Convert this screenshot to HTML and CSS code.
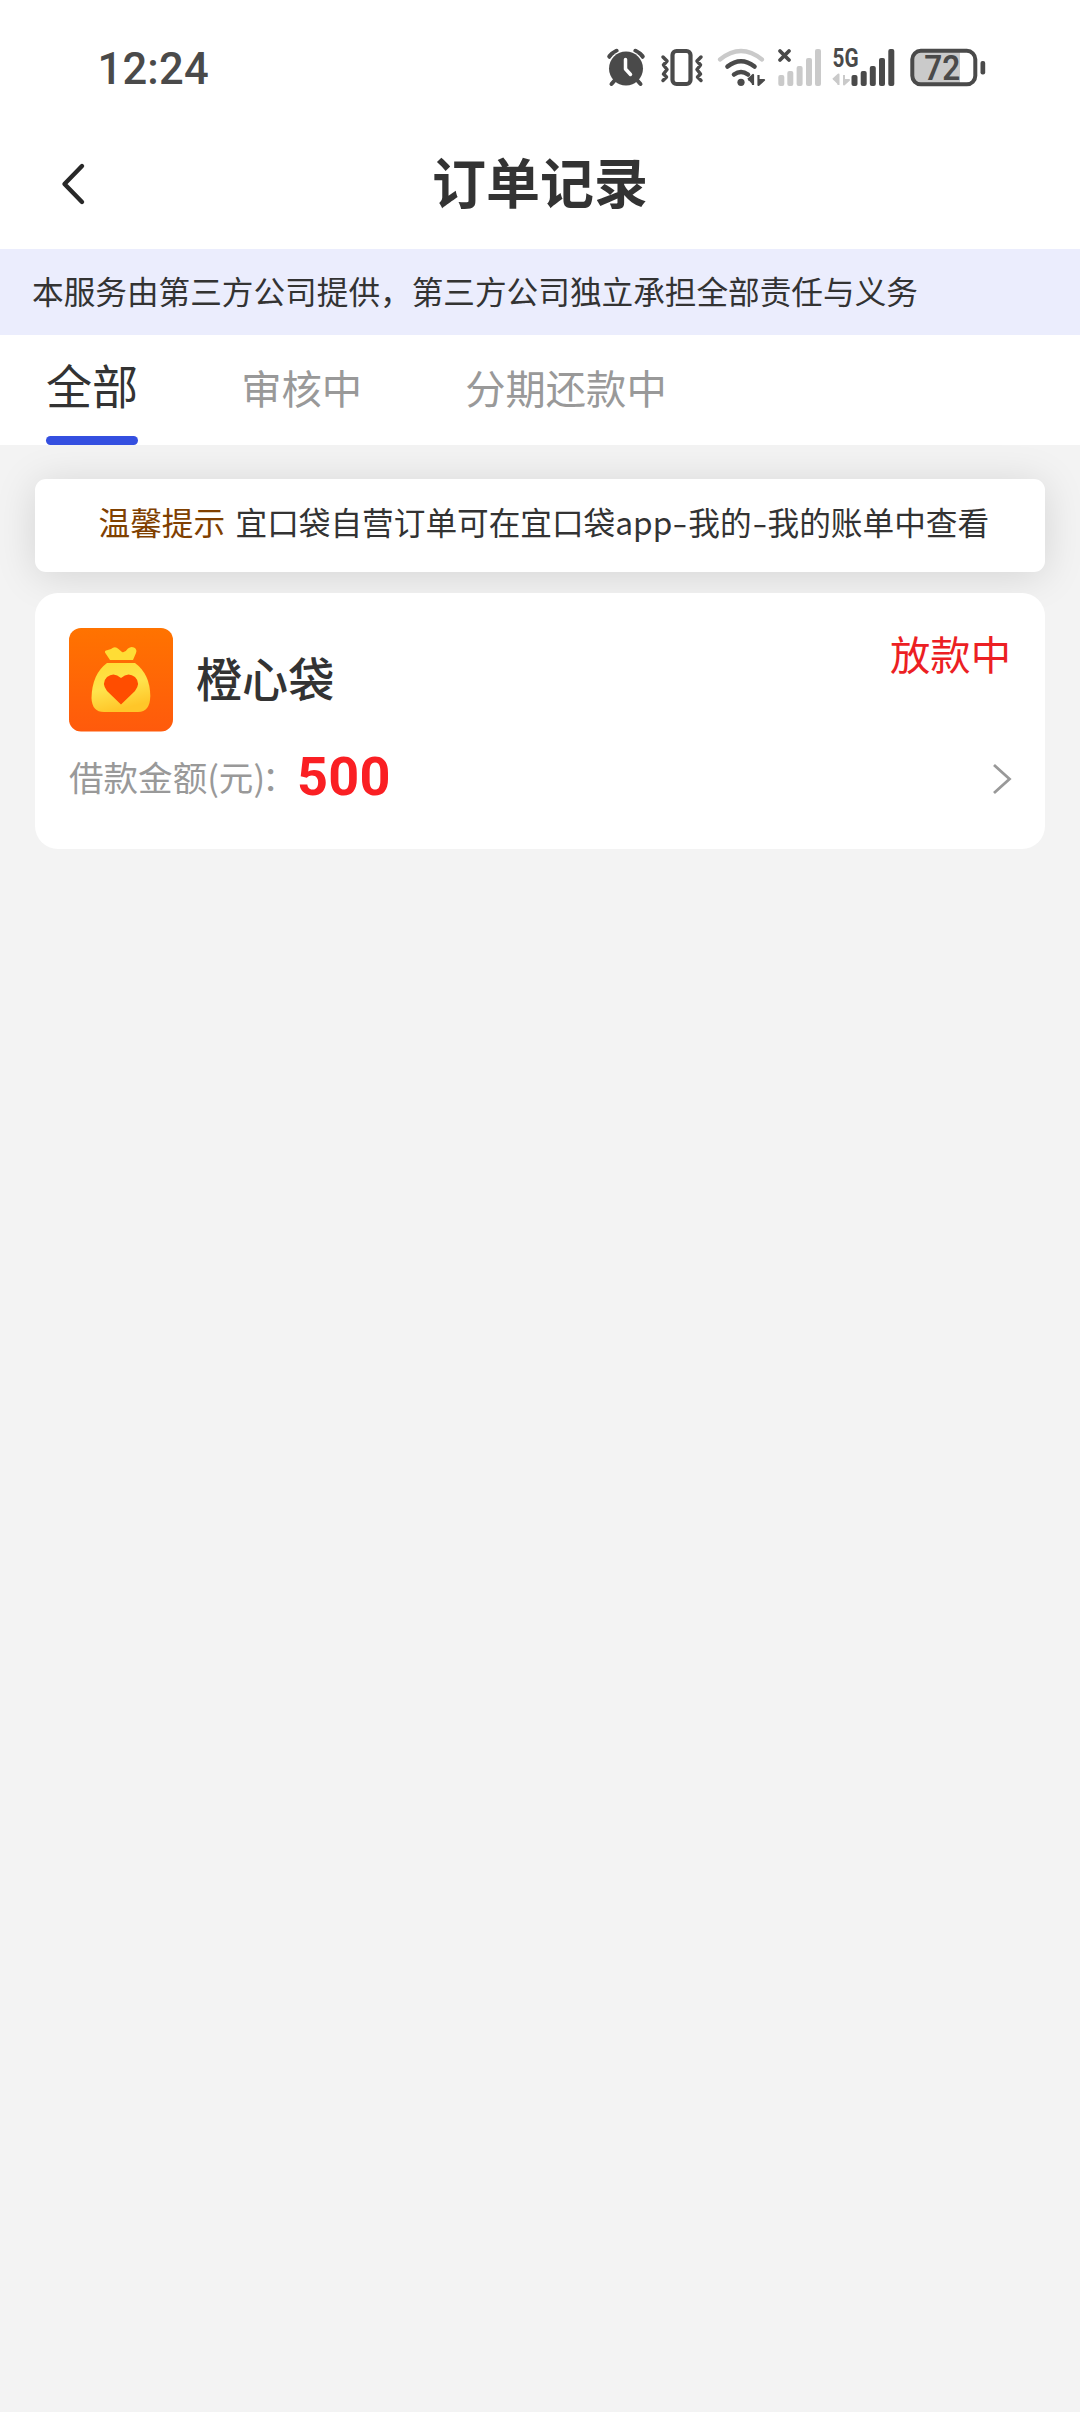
FILE: index.html
```html
<!DOCTYPE html>
<html lang="zh-CN">
<head>
<meta charset="utf-8">
<title>订单记录</title>
<link rel="stylesheet" href="styles.css">
</head>
<body>
<header class="top">
  <div class="status">
    <span class="clock">12:24</span>
    <div class="status-icons">
      <svg class="alarm" width="40" height="40" viewBox="0 0 40 40">
        <path d="M3.500 8.500A20 20 0 0 1 10.500 3M36.500 8.500A20 20 0 0 0 29.500 3" stroke="#4a4a4a" stroke-width="4.500" fill="none" stroke-linecap="round"/>
        <circle cx="20" cy="20.500" r="18.500" fill="#fff"/>
        <path d="M9 32L5.500 36M31 32L34.500 36" stroke="#4a4a4a" stroke-width="4" stroke-linecap="round"/>
        <circle cx="20" cy="20.500" r="17" fill="#4a4a4a"/>
        <path d="M19.500 11.500V21L24.500 26.500" stroke="#fff" stroke-width="3.500" fill="none" stroke-linecap="round" stroke-linejoin="round"/>
      </svg>
      <svg class="vibrate" width="44" height="40" viewBox="0 0 44 40">
        <rect x="12.500" y="3" width="18" height="33" rx="4" fill="none" stroke="#4a4a4a" stroke-width="4.200"/>
        <path d="M3 9L7 13L3.500 17L7 21.500L3.500 26L6.500 29L3 32.500M41 9L37 13L40.500 17L37 21.500L40.500 26L37.500 29L41 32.500" fill="none" stroke="#4a4a4a" stroke-width="3.500" stroke-linecap="round" stroke-linejoin="round"/>
      </svg>
      <svg class="wifi" width="50" height="40" viewBox="0 0 50 40">
        <path d="M3 11.500Q24 -5.500 45 11.500" fill="none" stroke="#cacaca" stroke-width="4.200" stroke-linecap="round"/>
        <path d="M10.500 18.500Q24 8 37.500 18.500" fill="none" stroke="#4a4a4a" stroke-width="4.600" stroke-linecap="round"/>
        <path d="M17 26.500Q24 21.500 31 26.500" fill="none" stroke="#4a4a4a" stroke-width="4.600" stroke-linecap="round"/>
        <circle cx="24" cy="34.300" r="3.600" fill="#4a4a4a"/>
        <path d="M31 31.500L36 27V37M36 31.500H31M41.500 27V37L47 32H41.500" fill="#4a4a4a" stroke="#4a4a4a" stroke-width="2.200" stroke-linejoin="round"/>
      </svg>
      <svg class="no-sim" width="46" height="40" viewBox="0 0 46 40">
        <path d="M3 3L12 12M12 3L3 12" stroke="#4a4a4a" stroke-width="3.800" stroke-linecap="round"/>
        <g fill="#cacaca"><rect x="1.300" y="27" width="6" height="11" rx="2"/><rect x="10.300" y="23" width="6" height="15" rx="2"/><rect x="19.600" y="18" width="6" height="20" rx="2"/><rect x="29" y="10" width="6" height="28" rx="2"/><rect x="38" y="1" width="6" height="37" rx="2"/></g>
      </svg>
      <svg class="mobile" width="64" height="40" viewBox="0 0 64 40">
        <text x="-.5" y="18.800" class="network" textLength="26" lengthAdjust="spacingAndGlyphs">5G</text>
        <path d="M0 31.500L5.500 26.500V37M11 27V36.500L16 32H11" fill="#cacaca" stroke="#cacaca" stroke-width="2" stroke-linejoin="round"/>
        <g fill="#4a4a4a"><rect x="18.500" y="27" width="6" height="11" rx="2"/><rect x="27.700" y="23" width="6" height="15" rx="2"/><rect x="36.800" y="18" width="6" height="20" rx="2"/><rect x="46" y="10" width="6" height="28" rx="2"/><rect x="55.300" y="1" width="6" height="37" rx="2"/></g>
      </svg>
      <svg class="battery" width="77" height="40" viewBox="0 0 77 40">
        <path d="M10 3H50V36H10Q3 36 3 29V10Q3 3 10 3Z" fill="#cacaca"/>
        <rect x="2.300" y="2.800" width="63" height="33.500" rx="8.500" fill="none" stroke="#4a4a4a" stroke-width="4"/>
        <rect x="70.500" y="13" width="4.700" height="13.500" rx="2" fill="#4a4a4a"/>
        <text x="14.300" y="31.700" class="level" textLength="36" lengthAdjust="spacingAndGlyphs">72</text>
      </svg>
    </div>
  </div>
  <div class="nav">
    <svg class="back" width="24" height="44" viewBox="0 0 24 44"><path d="M21 4L3.500 22L21 40" fill="none" stroke="#282828" stroke-width="4.400" stroke-linecap="round" stroke-linejoin="round"/></svg>
    <h1 class="title">订单记录</h1>
  </div>
</header>
<p class="disclaimer">本服务由第三方公司提供，第三方公司独立承担全部责任与义务</p>
<nav class="tabs">
  <span class="tab tab-active">全部</span>
  <span class="tab">审核中</span>
  <span class="tab">分期还款中</span>
</nav>
<main class="content">
  <div class="notice"><span class="notice-label">温馨提示</span><span>宜口袋自营订单可在宜口袋<span class="latin">app</span><span class="dash">-</span>我的<span class="dash">-</span>我的账单中查看</span></div>
  <section class="order">
    <div class="order-head">
      <svg class="logo" width="104" height="104" viewBox="0 0 104 104">
        <defs>
          <linearGradient id="orange" x1="0" y1="0" x2="0" y2="1"><stop offset="0" stop-color="#ff7300"/><stop offset="1" stop-color="#ff5a0c"/></linearGradient>
          <linearGradient id="gold" x1="0" y1="0" x2=".3" y2="1"><stop offset="0" stop-color="#ffdc33"/><stop offset=".55" stop-color="#ffe34c"/><stop offset="1" stop-color="#ffc629"/></linearGradient>
        </defs>
        <rect width="104" height="103.500" rx="12" fill="url(#orange)"/>
        <path d="M41 32L36 24.500Q35.500 22.500 38 22.300L42 21Q46 17.500 49.500 21L53 24Q56 25 59 20.500Q62 18 65 19.500Q68.500 21.500 67 25L64 32Z" fill="#ffdd35"/>
        <path d="M38 35H66Q81 46 81.300 68Q81 84 69 84H35Q23 84 22.500 70Q23 46 38 35Z" fill="url(#gold)"/>
        <path d="M52 76.500L38 63Q32 55 38 49Q45 43.500 52 50Q59 43.500 66 49Q72 55 66 63Z" fill="#ff4d00"/>
      </svg>
      <h2 class="name">橙心袋</h2>
      <span class="state">放款中</span>
    </div>
    <div class="order-row">
      <span class="label">借款金额(元)<span class="colon">：</span></span>
      <strong class="amount">500</strong>
      <svg class="more" width="22" height="34" viewBox="0 0 22 34"><path d="M3 3L18.500 17L3 31" fill="none" stroke="#999" stroke-width="2.800"/></svg>
    </div>
  </section>
</main>
</body>
</html>
```
FILE: styles.css
```css
* { box-sizing: border-box; margin: 0; }
body {
  width: 1080px;
  min-height: 2412px;
  background: #f3f3f3;
  color: #333;
  font-family: "Noto Sans CJK SC", sans-serif;
}
svg { display: block; flex: none; overflow: visible; }
.top { height: 249px; background: #fff; }
.status { display: flex; justify-content: space-between; height: 120px; padding: 48px 93px 0 97.500px; }
.clock { font: 500 43.500px/43px Roboto, sans-serif; color: #4a4a4a; letter-spacing: .2px; }
.status-icons { display: flex; }
.vibrate { margin-left: 14px; }
.wifi { margin-left: 13px; }
.no-sim { margin-left: 10px; }
.mobile { margin-left: 10px; }
.battery { margin-left: 13px; }
.network { font: 700 25px Roboto, sans-serif; fill: #4a4a4a; }
.level { font: 600 34.300px Roboto, sans-serif; fill: #4a4a4a; }
.nav { display: flex; align-items: flex-start; height: 129px; padding: 42px 62px 0 61px; }
.title { flex: 1; margin: -21px 23px 0 0; text-align: center; font-size: 54px; font-weight: 700; line-height: 80px; }
.disclaimer {
  height: 86px;
  padding-left: 32px;
  background: #ebedfd;
  font-size: 31.650px;
  line-height: 82px;
}
.tabs { display: flex; gap: 103px; height: 110px; padding-left: 46px; background: #fff; }
.tab { font-size: 40.320px; line-height: 104px; color: #999; }
.tab-active {
  display: flex;
  flex-direction: column;
  justify-content: space-between;
  font-size: 46.080px;
  line-height: 99px;
  color: #333;
}
.tab-active::after { content: ""; height: 9px; border-radius: 4.500px; background: #344fe0; }
.content { display: flex; flex-direction: column; gap: 21px; padding: 34px 35px 0; }
.notice {
  display: flex;
  gap: 10.500px;
  height: 93px;
  padding-left: 63.500px;
  border-radius: 11px;
  background: #fff;
  box-shadow: 0 4px 42px rgba(0, 0, 0, .13);
  font-size: 31.650px;
  line-height: 85px;
  white-space: nowrap;
}
.notice-label { color: #804000; }
.dash { display: inline-block; width: 16px; text-align: center; transform: scaleX(1.35); }
.order { position: relative; height: 256px; padding: 35px 34px 0; border-radius: 23px; background: #fff; }
.order-head { display: flex; }
.name { margin-left: 23px; font-size: 46.080px; font-weight: 500; line-height: 99px; }
.state { margin-left: auto; font-size: 40.320px; line-height: 49px; color: #ec1f23; }
.order-row { display: flex; align-items: flex-start; height: 92px; }
.label { width: 228px; font-size: 34.560px; line-height: 88px; color: #999; white-space: nowrap; }
.colon { margin-left: -3px; }
.amount { font: 700 54px/89px Roboto, sans-serif; letter-spacing: .3px; color: #fa1f23; }
.more { margin: 30px -2px 0 auto; }
```
